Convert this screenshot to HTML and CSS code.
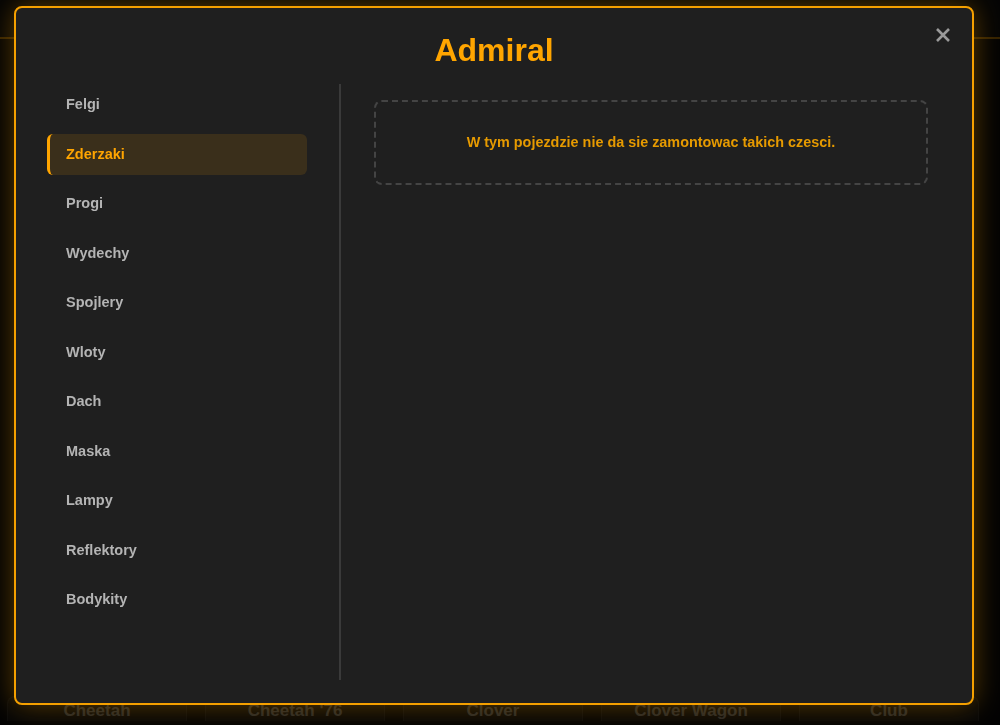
FILE: index.html
```html
<!DOCTYPE html>
<html lang="pl">
<head>
  <meta charset="UTF-8">
  <meta name="viewport" content="width=device-width, initial-scale=1.0">
  <title>Tuning - Admiral</title>
  <link rel="stylesheet" href="styles.css">
</head>
<body>
  <header class="topbar"></header>

  <main class="page">
    <h1 class="page-title">Wybierz pojazd</h1>

    <div class="car-grid">
      <div class="car-card"><div class="car-name">Cheetah</div></div>
      <div class="car-card"><div class="car-name">Cheetah '76</div></div>
      <div class="car-card"><div class="car-name">Clover</div></div>
      <div class="car-card"><div class="car-name">Clover Wagon</div></div>
      <div class="car-card"><div class="car-name">Club</div></div>
    </div>
  </main>

  <div class="overlay">
    <div class="modal">
      <button class="close-btn" aria-label="Zamknij">
        <svg width="14" height="14" viewBox="0 0 14 14">
          <path d="M1 1 L13 13 M13 1 L1 13" stroke="#9a9a9a" stroke-width="2.6" fill="none"/>
        </svg>
      </button>

      <div class="modal-header">
        <h2 class="modal-title">Admiral</h2>
      </div>

      <div class="modal-body">
        <ul class="part-list">
          <li class="part">Felgi</li>
          <li class="part active">Zderzaki</li>
          <li class="part">Progi</li>
          <li class="part">Wydechy</li>
          <li class="part">Spojlery</li>
          <li class="part">Wloty</li>
          <li class="part">Dach</li>
          <li class="part">Maska</li>
          <li class="part">Lampy</li>
          <li class="part">Reflektory</li>
          <li class="part">Bodykity</li>
        </ul>

        <div class="part-content">
          <div class="empty-box">W tym pojezdzie nie da sie zamontowac takich czesci.</div>
        </div>
      </div>
    </div>
  </div>
</body>
</html>
```

FILE: styles.css
```css
* {
  margin: 0;
  padding: 0;
  box-sizing: border-box;
}

body {
  font-family: 'Liberation Sans', Arial, sans-serif;
  background: #0e0e0e;
  color: #ccc;
  height: 100vh;
  overflow: hidden;
}

/* page behind the modal */
.topbar {
  height: 39px;
  border-bottom: 2px solid #ffa500;
  background: #141414;
}

.page {
  padding: 0 7px;
}

.page-title {
  text-align: center;
  font-size: 36px;
  color: #ffa500;
  padding: 28px 0;
}

.car-grid {
  display: grid;
  grid-template-columns: repeat(5, 180px);
  gap: 18px;
  margin-top: 559px;
}

.car-card {
  background: #1a1a1a;
  border: 1px solid #333;
  border-bottom: none;
  border-radius: 8px 8px 0 0;
}

.car-name {
  text-align: center;
  font-size: 17px;
  font-weight: bold;
  color: #b8b8b8;
  padding-top: 4px;
}

/* modal */
.overlay {
  position: fixed;
  inset: 0;
  background: rgba(0, 0, 0, 0.8);
  display: flex;
  align-items: flex-start;
  padding: 6px 0 0 14px;
}

.modal {
  position: relative;
  width: 960px;
  height: 699px;
  background: #1f1f1f;
  border: 2px solid #f5a000;
  border-radius: 8px;
  box-shadow: 0 0 28px rgba(255, 165, 0, 0.35);
  display: flex;
  flex-direction: column;
}

.close-btn {
  position: absolute;
  top: 20px;
  right: 22px;
  width: 14px;
  height: 14px;
  background: none;
  border: none;
  cursor: pointer;
  display: flex;
}

.modal-header {
  padding-top: 22px;
  margin-bottom: 14px;
}

.modal-title {
  text-align: center;
  font-size: 32px;
  line-height: 40px;
  color: #ffa500;
}

.modal-body {
  flex: 1;
  display: flex;
  padding: 0 44px 23px 31px;
  min-height: 0;
}

.part-list {
  list-style: none;
  width: 294px;
  padding-right: 32px;
  border-right: 2px solid #3a3a3a;
  display: flex;
  flex-direction: column;
  gap: 8.5px;
}

.part {
  padding: 12px 16px;
  line-height: 17px;
  font-size: 14.5px;
  font-weight: bold;
  color: #b4b4b4;
  border-left: 3px solid transparent;
  border-radius: 6px;
  cursor: pointer;
}

.part.active {
  color: #ffa500;
  background: rgba(255, 165, 0, 0.12);
  border-left-color: #ffa500;
}

.part-content {
  flex: 1;
  padding: 16px 0 0 33px;
}

.empty-box {
  border: 2px dashed #444;
  border-radius: 8px;
  padding: 31px 20px;
  line-height: 19px;
  text-align: center;
  font-size: 14.4px;
  font-weight: bold;
  color: #e69a00;
}
```
